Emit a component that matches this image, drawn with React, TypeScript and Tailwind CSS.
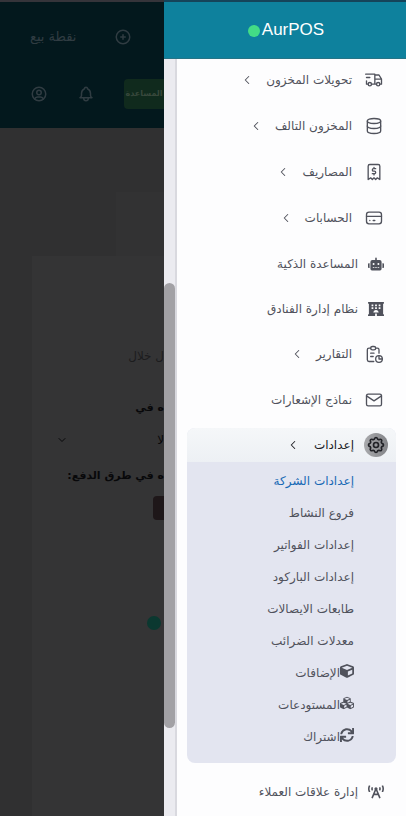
import React, { useState } from 'react';
import clsx from 'clsx';
import { FaRobot, FaHotel, FaBroadcastTower, FaCube, FaCubes, FaSync } from 'react-icons/fa';
import {
    TbTruckDelivery,
    TbDatabase,
    TbReceipt2,
    TbCreditCard,
    TbReport,
    TbMail,
    TbSettings,
    TbChevronLeft,
    TbChevronDown,
    TbCirclePlus,
    TbUserCircle,
    TbBell,
} from 'react-icons/tb';

type MenuItem = { label: string; icon: any; expandable?: boolean; solid?: boolean };
type SubItem = { label: string; icon?: any };

const menuItems: MenuItem[] = [
    { label: 'تحويلات المخزون', icon: TbTruckDelivery, expandable: true },
    { label: 'المخزون التالف', icon: TbDatabase, expandable: true },
    { label: 'المصاريف', icon: TbReceipt2, expandable: true },
    { label: 'الحسابات', icon: TbCreditCard, expandable: true },
    { label: 'المساعدة الذكية', icon: FaRobot, solid: true },
    { label: 'نظام إدارة الفنادق', icon: FaHotel, solid: true },
    { label: 'التقارير', icon: TbReport, expandable: true },
    { label: 'نماذج الإشعارات', icon: TbMail },
];

const settingsItems: SubItem[] = [
    { label: 'إعدادات الشركة' },
    { label: 'فروع النشاط' },
    { label: 'إعدادات الفواتير' },
    { label: 'إعدادات الباركود' },
    { label: 'طابعات الايصالات' },
    { label: 'معدلات الضرائب' },
    { label: 'الإضافات', icon: FaCube },
    { label: 'المستودعات', icon: FaCubes },
    { label: 'اشتراك', icon: FaSync },
];

function MenuRow({ item }: { item: MenuItem }) {
    const Icon = item.icon;
    const content = (
        <>
            <Icon className={clsx('shrink-0', item.solid ? 'size-4' : 'size-5 stroke-[1.6]')} />
            <span>{item.label}</span>
        </>
    );
    if (item.expandable) {
        return (
            <button type="button" className="flex h-[34px] w-full items-center gap-3 px-3">
                {content}
                <TbChevronLeft className="size-3.5 stroke-[1.8]" />
            </button>
        );
    }
    return (
        <a href="#" className={clsx('flex h-[33px] items-center px-3', item.solid ? 'gap-2.5' : 'gap-3')}>
            {content}
        </a>
    );
}

function SettingsGroup() {
    const [open, setOpen] = useState(true);
    return (
        <div className="rounded-lg bg-[#e3e5f0]">
            <button
                type="button"
                onClick={() => setOpen(!open)}
                className="flex h-[34px] w-full items-center gap-2.5 rounded-t-lg bg-linear-to-b from-[#f5f7f9] to-[#edf0f4] px-2 text-[#202126]"
            >
                <span className="flex size-6 items-center justify-center rounded-full bg-linear-to-r from-[#a9aaad] to-[#838488]">
                    <TbSettings className="size-5" />
                </span>
                <span>إعدادات</span>
                <TbChevronLeft className="mr-1 size-3.5 stroke-[1.8]" />
            </button>
            {open && (
                <ul className="pt-[3px] pb-2.5">
                    {settingsItems.map((sub, index) => (
                        <li key={sub.label}>
                            <a
                                href="#"
                                className={clsx('flex h-8 items-center pr-[42px]', index === 0 ? 'text-[#1769b5]' : 'text-[#50525c]')}
                            >
                                {sub.icon && <sub.icon className="mb-1 size-3.5" />}
                                {sub.label}
                            </a>
                        </li>
                    ))}
                </ul>
            )}
        </div>
    );
}

function DimmedPage() {
    return (
        <main className="flex min-w-0 flex-1 flex-col overflow-hidden border-t-2 border-[#35343a] bg-[#303031]">
            <nav className="flex h-[126px] shrink-0 flex-col bg-[#03181d] text-[#303c42]">
                <div className="flex h-[70px] items-center justify-between pr-8 pl-[30px]">
                    <TbCirclePlus className="size-[18px]" />
                    <span className="text-[13px]">نقطة بيع</span>
                </div>
                <div className="flex h-11 items-center justify-between pl-[30px]">
                    <button type="button" className="flex h-[30px] w-10 items-center justify-center rounded-l-sm bg-[#102a1d] text-[8px] font-bold whitespace-nowrap text-[#38483c]">
                        المساعدة
                    </button>
                    <TbBell className="size-[18px]" />
                    <TbUserCircle className="size-[18px]" />
                </div>
            </nav>
            <div className="ml-[116px] mt-16 h-16 bg-[#323233]" />
            <section className="ml-8 flex flex-1 flex-col bg-[#343435] whitespace-nowrap text-[#08080a]">
                <p className="mt-[88px] h-6 leading-6 text-[#1c1c1e]">ل خلال</p>
                <p className="mt-7 h-6 text-[11px] leading-6 font-bold">ه في</p>
                <div className="mt-1 flex h-8 items-center justify-between pl-6">
                    <span>لا</span>
                    <TbChevronDown className="size-3" />
                </div>
                <p className="mt-2 h-6 text-[11px] leading-6 font-bold">ه في طرق الدفع:</p>
                <span className="mt-2 h-6 w-[11px] rounded-l-sm bg-[#1e1719]" />
                <span className="mt-24 mr-[3px] size-3.5 rounded-full bg-[#0b3830]" />
            </section>
        </main>
    );
}

function App() {
    return (
        <div dir="rtl" className="flex h-screen overflow-hidden bg-[#303031] font-['DejaVu_Sans',sans-serif] text-xs">
            <aside className="flex w-[242px] shrink-0 flex-col bg-[#fdfdfe] text-[#50525c]">
                <header
                    dir="ltr"
                    className="flex h-[59px] shrink-0 items-center justify-center gap-0.5 border-t-2 border-b border-t-[#15445a] border-b-[#267486] bg-[#0e819d] pt-px pl-0.5 font-['Liberation_Sans',sans-serif] text-[17px] text-white"
                >
                    <span className="size-3 rounded-full bg-[#43dc86]" />
                    <span>AurPOS</span>
                </header>
                <div className="flex min-h-0 flex-1">
                    <nav className="flex min-w-0 flex-1 flex-col gap-3 px-2.5 pt-1">
                        {menuItems.map((item) => (
                            <MenuRow key={item.label} item={item} />
                        ))}
                        <SettingsGroup />
                        <MenuRow item={{ label: 'إدارة علاقات العملاء', icon: FaBroadcastTower, solid: true }} />
                    </nav>
                    <div className="w-[13px] shrink-0 border-r-2 border-[#d9d9df] bg-[#ebebf0] pt-56">
                        <div className="h-[445px] rounded-full bg-[#a2a1a5]" />
                    </div>
                </div>
            </aside>
            <DimmedPage />
        </div>
    );
}

export default App;
